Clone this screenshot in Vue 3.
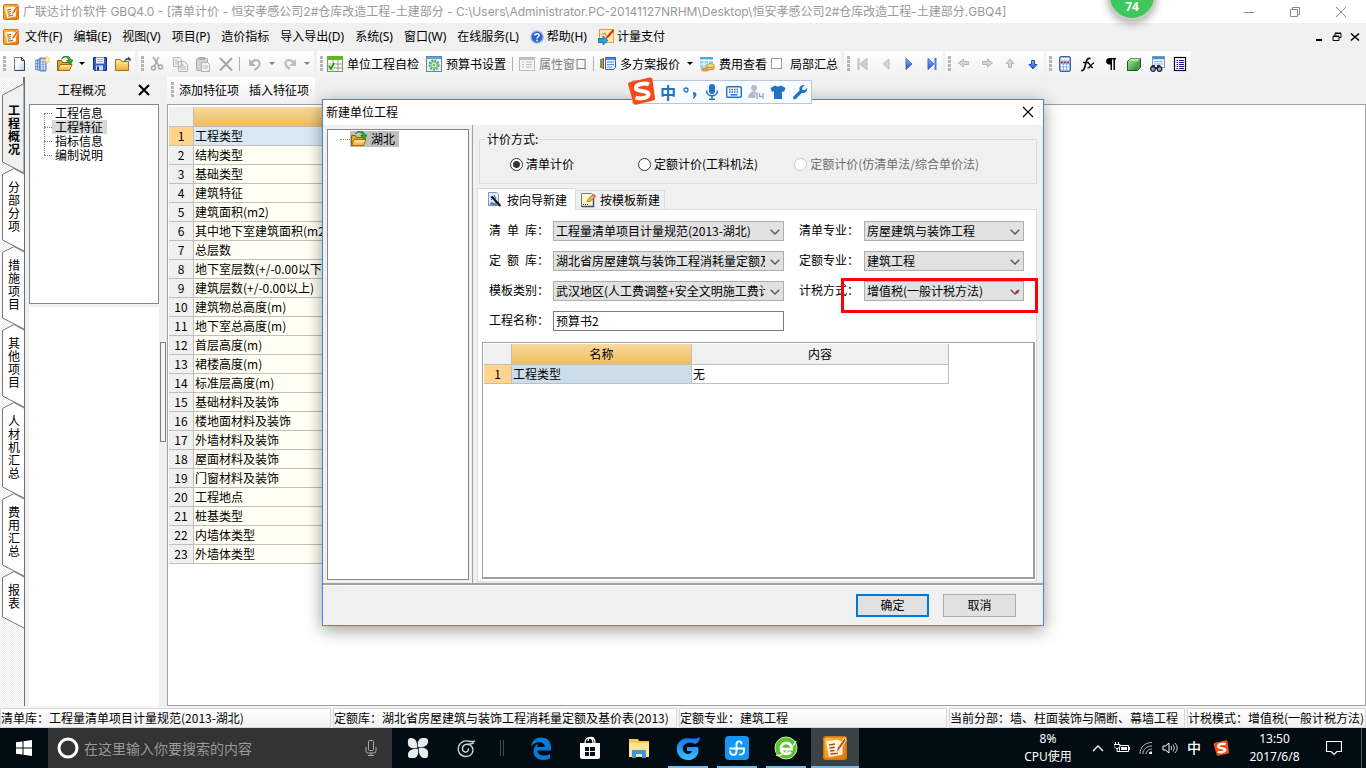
<script setup>
import { ref } from 'vue'

const path = 'C:\\Users\\Administrator.PC-20141127NRHM\\Desktop\\恒安孝感公司2#仓库改造工程-土建部分.GBQ4'
const title = `广联达计价软件 GBQ4.0 - [清单计价 - 恒安孝感公司2#仓库改造工程-土建部分 - ${path}]`

const menus = [
  { text: '文件(F)' }, { text: '编辑(E)' }, { text: '视图(V)' }, { text: '项目(P)' },
  { text: '造价指标' }, { text: '导入导出(D)' }, { text: '系统(S)' }, { text: '窗口(W)' },
  { text: '在线服务(L)' }, { text: '帮助(H)', icon: 'help', size: 'i14' }, { text: '计量支付', icon: 'pay', size: 'i16' },
]

const toolGroups = [
  [{ icon: 'new' }, { icon: 'building' }, { icon: 'open' }, { caret: true }, { icon: 'save' }, { icon: 'folder' }],
  [{ icon: 'cut' }, { icon: 'copy' }, { icon: 'paste' }, { icon: 'delete' }, { sep: true },
    { icon: 'undo' }, { caret: true, dim: true }, { icon: 'redo' }, { caret: true, dim: true }],
  [{ icon: 'selfcheck', text: '单位工程自检' }, { icon: 'gear', text: '预算书设置' }, { sep: true },
    { icon: 'props', text: '属性窗口', dim: true }, { sep: true },
    { icon: 'plans', text: '多方案报价' }, { caret: true }, { icon: 'cost', text: '费用查看' }, { check: '局部汇总' }],
  [{ icon: 'first' }, { icon: 'prev' }, { icon: 'next' }, { icon: 'last' }],
  [{ icon: 'left' }, { icon: 'right' }, { icon: 'up' }, { icon: 'down' }],
  [{ icon: 'calc' }, { icon: 'fx' }, { icon: 'para' }, { icon: 'cube' }, { icon: 'find' }, { icon: 'list' }],
]

const sideTabs = ['工程概况', '分部分项', '措施项目', '其他项目', '人材机汇总', '费用汇总', '报表']
  .map((name, i) => ({ name, h: 26 + 13 * name.length + (i === 0 ? 13 : 0) }))

const treeItems = ['工程信息', '工程特征', '指标信息', '编制说明']

const rows = [
  '工程类型', '结构类型', '基础类型', '建筑特征', '建筑面积(m2)', '其中地下室建筑面积(m2)', '总层数',
  '地下室层数(+/-0.00以下)', '建筑层数(+/-0.00以上)', '建筑物总高度(m)', '地下室总高度(m)', '首层高度(m)',
  '裙楼高度(m)', '标准层高度(m)', '基础材料及装饰', '楼地面材料及装饰', '外墙材料及装饰', '屋面材料及装饰',
  '门窗材料及装饰', '工程地点', '桩基类型', '内墙体类型', '外墙体类型',
]

const method = ref('list')
const methods = [
  { id: 'list', text: '清单计价' },
  { id: 'quota', text: '定额计价(工料机法)' },
  { id: 'mix', text: '定额计价(仿清单法/综合单价法)', off: true },
]

const fields = [
  { id: 'qdk', label: '清\u2002单\u2002库：', value: '工程量清单项目计量规范(2013-湖北)' },
  { id: 'qdzy', label: '清单专业：', value: '房屋建筑与装饰工程' },
  { id: 'dek', label: '定\u2002额\u2002库：', value: '湖北省房屋建筑与装饰工程消耗量定额及基价表(2013)' },
  { id: 'dezy', label: '定额专业：', value: '建筑工程' },
  { id: 'mblb', label: '模板类别：', value: '武汉地区(人工费调整+安全文明施工费计取)' },
  { id: 'jsfs', label: '计税方式：', value: '增值税(一般计税方法)', marked: true },
]
const projectName = ref('预算书2')

const status = [
  '清单库：工程量清单项目计量规范(2013-湖北)',
  '定额库：湖北省房屋建筑与装饰工程消耗量定额及基价表(2013)',
  '定额专业：建筑工程',
  '当前分部：墙、柱面装饰与隔断、幕墙工程',
  '计税模式：增值税(一般计税方法)',
]

const apps = [
  { icon: 'edge' }, { icon: 'store' }, { icon: 'explorer' },
  { icon: 'gbrowser', open: true }, { icon: 'anchor', open: true },
  { icon: 'greene', open: true }, { icon: 'gbq', open: true, active: true },
]
</script>

<template>
  <svg class="defs" aria-hidden="true">
    <defs>
      <linearGradient id="gOrange" x1="0" y1="0" x2="1" y2="1"><stop offset="0" stop-color="#ffc23c" /><stop offset="1" stop-color="#ee6f00" /></linearGradient>
      <linearGradient id="gFolder" x1="0" y1="0" x2="0" y2="1"><stop offset="0" stop-color="#fff0a0" /><stop offset="1" stop-color="#efae30" /></linearGradient>
      <linearGradient id="gBlue" x1="0" y1="0" x2="0" y2="1"><stop offset="0" stop-color="#8fb8ff" /><stop offset="1" stop-color="#1c4fc4" /></linearGradient>
      <linearGradient id="gGreen" x1="0" y1="0" x2="1" y2="1"><stop offset="0" stop-color="#9ae08c" /><stop offset="1" stop-color="#2c8a30" /></linearGradient>
      <linearGradient id="gSwirl" x1="0" y1="0" x2="0" y2="1"><stop offset="0" stop-color="#1d6cf0" /><stop offset="1" stop-color="#35c4ff" /></linearGradient>
      <linearGradient id="gPaper" x1="0" y1="0" x2="1" y2="1"><stop offset="0.4" stop-color="#fff" /><stop offset="1" stop-color="#b4c6e4" /></linearGradient>
    </defs>
    <symbol id="gbq" viewBox="0 0 16 16">
      <rect x="0.5" y="0.5" width="15" height="15" rx="1.5" fill="url(#gOrange)" stroke="#c87818" />
      <path d="M2 3.500l8-1 3 1.500v8.500L4 14z" fill="#fff6dc" />
      <path d="M4 6l4-.6M4.300 8l3.500-.5M4.700 10l3-.3M5 12l5-.5" stroke="#a4501c" fill="none" />
      <path d="M14.500 1L9.500 8l-.8 3 2.300-2L15.300 3z" fill="#d9481c" stroke="#fff" stroke-width=".5" />
    </symbol>
    <symbol id="help" viewBox="0 0 16 16">
      <circle cx="8" cy="8" r="7" fill="#2c63cf" stroke="#9db7e8" stroke-width="1.600" />
      <path d="M5.500 6.400C5.600 3.400 10.600 3.500 10.400 6.300 10.200 8 8 8 8 9.800" fill="none" stroke="#fff" stroke-width="1.700" /><rect x="7.100" y="11" width="1.900" height="1.900" fill="#fff" />
    </symbol>
    <symbol id="pay" viewBox="0 0 16 16">
      <rect x="1.500" y="0.500" width="14" height="13" fill="#ffe9b0" stroke="#f0a020" />
      <path d="M3 6l4-2 2 5" stroke="#c98a5a" fill="none" /><path d="M15 0l-6 7-1 3 3-2 5-6z" fill="#d83018" />
      <path d="M0 9.500h5V7l5 4.500-5 4.500v-2.500H0z" fill="#28a0e0" stroke="#0a5c98" stroke-width=".7" />
    </symbol>
    <symbol id="new" viewBox="0 0 16 16"><path d="M3.500 1.500h7l3 3v10h-10z" fill="url(#gPaper)" stroke="#6e7f9c" /><path d="M10.500 1.500v3h3z" fill="#fff" stroke="#3c4d70" /><path d="M13.500 5v9.500h-10" fill="none" stroke="#2c4068" /></symbol>
    <symbol id="building" viewBox="0 0 16 16"><path d="M1 4l5-2v13l-5-1z" fill="#7ea6d8" /><path d="M6 2h6v13H6z" fill="#a9c4ea" stroke="#3e69a8" stroke-width=".8" /><path d="M7 4.500h4M7 7h4M7 9.500h4M7 12h4M2 6h3M2 9h3M2 12h3" stroke="#fff" /><path d="M9 4v11M3.500 4v10" stroke="#4a78bc" stroke-width=".7" /><path d="M13 0v8M9.500 4h7M10.500 1.500l5 5M15.500 1.500l-5 5" stroke="#ffc02a" /><circle cx="13" cy="4" r="1.600" fill="#fff7b0" /></symbol>
    <symbol id="open" viewBox="0 0 16 16"><path d="M.5 14.500v-10h4l1 2h7v8z" fill="#e5a726" stroke="#8c6010" /><path d="M.7 14.500L3 8.500h12l-2.500 6z" fill="url(#gFolder)" stroke="#9c6c14" /><path d="M4.500 3C7 0 10.500.5 12 4.500h-2.300l4 4 2.100-4.500h-1.900C12.500-1 7-1.500 4.500 3z" fill="#2fb52f" stroke="#0c6c14" stroke-width=".7" /></symbol>
    <symbol id="save" viewBox="0 0 16 16"><path d="M1.500 1.500h13v13h-12l-1-1z" fill="#3a5bd0" stroke="#1c2f80" /><rect x="4" y="1.500" width="8" height="6" fill="#eef3ff" /><path d="M5 3.500h6M5 5.500h6" stroke="#9db0dc" /><rect x="4" y="9.500" width="7" height="5" fill="#d9def0" /><rect x="5" y="10.500" width="2" height="4" fill="#1c2f80" /></symbol>
    <symbol id="folder" viewBox="0 0 16 16"><path d="M.5 14.500v-11h5l1 2h7v9z" fill="url(#gFolder)" stroke="#9b7422" /><path d="M9 5c1-2 2-3 4-3V.5L16 3l-1 3-1-2c-2 0-3 .5-5 1z" fill="#34537c" /></symbol>
    <symbol id="cut" viewBox="0 0 16 16"><path d="M4 1l6 9M9.500 1l-4 9" stroke="#a8a8a8" stroke-width="1.600" fill="none" /><circle cx="4.500" cy="12" r="2" fill="none" stroke="#a8a8a8" stroke-width="1.500" /><circle cx="11.500" cy="11" r="2" fill="none" stroke="#a8a8a8" stroke-width="1.500" /></symbol>
    <symbol id="copy" viewBox="0 0 16 16"><path d="M1.500 1.500h6l2 2v7h-8zM6.500 5.500h6l3 3v7h-9z" fill="#f2f2f2" stroke="#b4b4b4" /><path d="M3 4h3M3 6h3M3 8h3M8 9h4M8 11h6M8 13h6" stroke="#bbb" /></symbol>
    <symbol id="paste" viewBox="0 0 16 16"><rect x="1.500" y="2.500" width="11" height="12" rx="1" fill="#d2d2d2" stroke="#a8a8a8" /><rect x="4" y="1" width="6" height="3" fill="#b0b0b0" /><path d="M6.500 6.500h6l2 2v7h-8z" fill="#f4f4f4" stroke="#b0b0b0" /><path d="M8 10h5M8 12h5" stroke="#bbb" /></symbol>
    <symbol id="delete" viewBox="0 0 16 16"><path d="M2 2l12 12.500M14 2L2 14.500" stroke="#a6a6a6" stroke-width="2" /></symbol>
    <symbol id="undo" viewBox="0 0 16 16"><path d="M4 7C7 3 13 3 12.500 8c-.3 3-2.500 4.500-5 6" fill="none" stroke="#b4b4b4" stroke-width="2.200" /><path d="M2 3v7h7z" fill="#b4b4b4" /></symbol>
    <symbol id="redo" viewBox="0 0 16 16"><path d="M12 7C9 3 3 3 3.500 8c.3 2 2 3.500 4.500 5" fill="none" stroke="#bcbcbc" stroke-width="2.200" /><path d="M14 3v7H7z" fill="#bcbcbc" /></symbol>
    <symbol id="selfcheck" viewBox="0 0 16 16"><rect x=".5" y=".5" width="15" height="15" fill="#fff" stroke="#7a8c70" /><rect x="0" y="0" width="16" height="4" fill="#62b51c" /><path d="M0 8h16M0 12h16M6 4v12M11 4v12" stroke="#8a9a88" /><rect x="1" y="7" width="6" height="7" fill="#c8ecb0" /><path d="M2 10l2 3 3-6" fill="none" stroke="#1f8c10" stroke-width="1.600" /></symbol>
    <symbol id="gear" viewBox="0 0 16 16"><rect x=".5" y=".5" width="15" height="15" fill="#e8f2fb" stroke="#5a87bd" /><rect x="1" y="1" width="14" height="2" fill="#6b9fda" /><circle cx="8" cy="9" r="4.500" fill="none" stroke="#4fa45a" stroke-width="2" stroke-dasharray="2 1" /><circle cx="8" cy="9" r="3.200" fill="#d2efd0" stroke="#6ab46e" /><circle cx="8" cy="9" r="1" fill="#4fa45a" /></symbol>
    <symbol id="props" viewBox="0 0 16 16"><rect x=".5" y="1.500" width="15" height="13" fill="#f4f4f4" stroke="#b8b8b8" /><path d="M1 3h14" stroke="#c4c4c4" stroke-width="2" /><path d="M3 6h2M7 6h6M3 8.500h2M7 8.500h6M3 11h2M7 11h6" stroke="#bdbdbd" /></symbol>
    <symbol id="plans" viewBox="0 0 16 16"><path d="M1 3v9" stroke="#18a028" stroke-width="1.600" /><path d="M3.200 2v11" stroke="#e02818" stroke-width="1.600" /><path d="M5.500 1.500h10v10l-2 2h-8z" fill="#eaf2ff" stroke="#2566c8" /><path d="M6 3h9" stroke="#4a8ae6" stroke-width="2" /><path d="M7 6h7M7 8.500h7M7 11h5" stroke="#5c8ed4" /></symbol>
    <symbol id="cost" viewBox="0 0 16 16"><rect x="1" y="1" width="13" height="11" fill="#8fd4f0" /><path d="M1 4.500h13M1 8h13M5 1v11M9.500 1v11" stroke="#fff" /><rect x="1" y="1" width="13" height="2" fill="#4fa9d8" /><ellipse cx="6" cy="13.500" rx="4" ry="2" fill="#d2a040" /><ellipse cx="11.500" cy="12" rx="4" ry="2" fill="#e7bd62" stroke="#a87820" stroke-width=".6" /><ellipse cx="11.500" cy="9.500" rx="4" ry="2" fill="#f2d488" stroke="#a87820" stroke-width=".6" /></symbol>
    <symbol id="first" viewBox="0 0 16 16"><path d="M3.500 2v12" stroke="#c2c2c2" stroke-width="2" /><path d="M12 2v12L5 8z" fill="#d0d0d0" stroke="#bdbdbd" /></symbol>
    <symbol id="prev" viewBox="0 0 16 16"><path d="M11 3v10L5 8z" fill="#d4d4d4" stroke="#bfbfbf" /></symbol>
    <symbol id="next" viewBox="0 0 16 16"><path d="M5 2.500v11L11 8z" fill="url(#gBlue)" stroke="#3a68cc" /></symbol>
    <symbol id="last" viewBox="0 0 16 16"><path d="M4 2.500v11l6-5.500z" fill="url(#gBlue)" stroke="#3a68cc" /><path d="M11.500 2v12" stroke="#4a78d8" stroke-width="2" /></symbol>
    <symbol id="left" viewBox="0 0 16 16"><path d="M2.500 7l5-4v2.500h5v3h-5V11z" fill="#d6d6d6" stroke="#b6b6b6" /></symbol>
    <symbol id="right" viewBox="0 0 16 16"><path d="M13.500 7l-5-4v2.500h-5v3h5V11z" fill="#d6d6d6" stroke="#b6b6b6" /></symbol>
    <symbol id="up" viewBox="0 0 16 16"><path d="M8 3l4 4.500H9.500v4h-3v-4H4z" fill="#d6d6d6" stroke="#b6b6b6" /></symbol>
    <symbol id="down" viewBox="0 0 16 16"><path d="M8 13l4-4.500H9.500v-4h-3v4H4z" fill="url(#gBlue)" stroke="#2450b0" /></symbol>
    <symbol id="calc" viewBox="0 0 16 16"><rect x="2.500" y=".5" width="11" height="15" rx="1.500" fill="#8fb2e4" stroke="#3c64a4" /><rect x="4" y="2" width="8" height="2.500" fill="#e8f6ff" /><path d="M4 6.500h8" stroke="#d02c2c" stroke-width="1.600" stroke-dasharray="2 1" /><path d="M4 9.500h8M4 12.500h8" stroke="#fff" stroke-width="1.800" stroke-dasharray="2 1" /></symbol>
    <symbol id="fx" viewBox="0 0 16 16"><path d="M1 14.500c3 .5 3.500-2 4.500-6S7 1.500 10.500 2.500M3 6.500h6" fill="none" stroke="#111" stroke-width="1.700" /><path d="M8 7.500c2.500-1 2 5 5 4M14 7c-2.500 0-3.500 5-6.500 5" fill="none" stroke="#111" stroke-width="1.400" /></symbol>
    <symbol id="para" viewBox="0 0 16 16"><path d="M13 2H6.500C2 2 2 8.500 6.500 8.500H7.500V14H9V3.500h1.500V14H12V3.500h1z" fill="#000" /></symbol>
    <symbol id="cube" viewBox="0 0 16 16"><path d="M1.500 5.500l3-3h10v9l-3 3h-10z" fill="#4f9f50" stroke="#24502a" /><path d="M2 5.500h9.500l3-3h-10z" fill="#b4e4a8" /><rect x="2" y="6" width="9" height="8" fill="url(#gGreen)" /></symbol>
    <symbol id="find" viewBox="0 0 16 16"><rect x="3.500" y=".5" width="12" height="11" fill="#eef5ff" stroke="#7a9cc8" /><path d="M4 2h11" stroke="#4f88d8" stroke-width="2.500" /><path d="M5 5.500h9M5 8h9" stroke="#8cb0e0" /><path d="M3 9h3v2h2V9h3l2 4H1z" fill="#333" /><circle cx="4" cy="13" r="2.300" fill="#8ad" stroke="#222" stroke-width="1.200" /><circle cx="10.500" cy="13" r="2.300" fill="#8ad" stroke="#222" stroke-width="1.200" /></symbol>
    <symbol id="list" viewBox="0 0 16 16"><rect x="2.500" y="1.500" width="11" height="13" fill="#fff" stroke="#000" stroke-width="1.200" /><path d="M4.500 4.500h1.500M7 4.500h5M4.500 6.500h1.500M7 6.500h5M4.500 8.500h1.500M7 8.500h5M4.500 10.500h1.500M7 10.500h5M4.500 12.500h1.500M7 12.500h5" stroke="#16168c" /></symbol>
    <symbol id="wizard" viewBox="0 0 16 16"><path d="M1.500.5h8l2 2v11h-10z" fill="#e4eefa" stroke="#7c94bc" /><path d="M2 12.500l3-3 2 2 2-2 2 4z" fill="#5a7cb4" /><circle cx="5" cy="5" r="1.500" fill="#9ab8e4" /><path d="M4.500 4.500l9 9.500" stroke="#111" stroke-width="2" /><path d="M4 8l3-3M7 3l2 4" stroke="#222" stroke-width=".8" /></symbol>
    <symbol id="template" viewBox="0 0 16 16"><path d="M1.500 1.500h10l2 2v11h-12z" fill="#fffbc8" stroke="#6c7c90" /><path d="M13.500 5v9.500h-12" fill="none" stroke="#345070" stroke-width="1.400" /><path d="M3 12.500h5" stroke="#444" stroke-dasharray="1 1" /><path d="M7 10l1.500-3.500L13.500 2 16 4.500 10.500 9z" fill="#f0b050" stroke="#8c5a20" stroke-width=".6" /><path d="M13.500 2L16 4.500l-1.500 1.400L12 3.500z" fill="#e07080" /></symbol>
    <symbol id="sogou" viewBox="0 0 28 28"><path d="M3 5L23 .5q2-.3 2.400 1.600L28 21q.3 2-1.600 2.500L9 27.700q-2 .4-2.500-1.500L1.200 8Q.8 5.600 3 5z" fill="#f04e17" /><path d="M22 7.500C18 5.500 8.500 7 9 11.500c.4 3.500 12 1.500 12.500 5.500.4 4-8.500 5.500-13 3.500" fill="none" stroke="#fff" stroke-width="4" /></symbol>
    <symbol id="mic" viewBox="0 0 16 16"><rect x="5" y="0" width="6" height="10" rx="3" fill="#1f72c4" /><path d="M2.500 6.500c0 7 11 7 11 0M8 12v3M5 15.200h6" fill="none" stroke="#1f72c4" stroke-width="1.600" /></symbol>
    <symbol id="kbd" viewBox="0 0 16 16"><rect x=".7" y="2.700" width="14.600" height="10.600" rx="1" fill="none" stroke="#1f72c4" stroke-width="1.400" /><path d="M3 5.500h10M3 8h10" stroke="#1f72c4" stroke-width="1.500" stroke-dasharray="1.500 1" /><path d="M4.500 10.800h7" stroke="#1f72c4" stroke-width="1.500" /></symbol>
    <symbol id="person" viewBox="0 0 16 16"><circle cx="6" cy="4" r="3" fill="#b2bdcf" /><path d="M0 14c0-8 11-8 11-4v4z" fill="#b2bdcf" /><path d="M7.500 9h1.500v6M11.500 9v3.500h3.500M15 9v6" fill="none" stroke="#f7fbff" stroke-width="3" /><path d="M7.500 9.500h1.500v5.500M11.500 9v3.500H15M15 9v6" fill="none" stroke="#9aa9c2" stroke-width="1.300" /></symbol>
    <symbol id="shirt" viewBox="0 0 16 16"><path d="M5 1.500q3 2 6 0l4.500 2.500-1.500 4-2-.7V15H4V7.300L2 8 .5 4z" fill="#1f72c4" /></symbol>
    <symbol id="wrench" viewBox="0 0 16 16"><path d="M1.500 12.500l6-6C6.500 3 9.500.5 12.500 1.200L10 3.800l.5 2 2 .5 2.600-2.500c.7 3.200-1.800 6-5.300 5.200l-6 6c-1.800 1.200-3.800-.8-2.300-2.500z" fill="#1f72c4" /></symbol>
    <symbol id="pinwheel" viewBox="0 0 24 24">
      <g fill="#e8ecec">
        <path id="petal" d="M12.300 11.200C10.800 6 12.500 1 17 1h2.500Q23 1 23 4.500C23 9 19 11.500 12.300 11.200z" />
        <use href="#petal" transform="rotate(90 12 12)" /><use href="#petal" transform="rotate(180 12 12)" /><use href="#petal" transform="rotate(270 12 12)" />
      </g>
    </symbol>
    <symbol id="swirl" viewBox="0 0 24 24"><path d="M23 3.500C18 6 14 2 9 4 3 6.500 1 13 4 18c4 6 13 5 15.500 0 2.500-6-1.500-11-7-10.500-5 .6-6.500 7-2.500 9 3 1.500 6-1.500 4.500-4M21.500 5.500c-3 2.500-6 1.500-9 2" fill="none" stroke="#ccd4d4" stroke-width="1.700" /></symbol>
    <symbol id="edge" viewBox="0 0 24 24"><path d="M2 10.500C3 4.500 7 1.500 12.500 1.500 19 1.500 22 6 22 12v2.500H8.500c.5 6 8 6 12.500 3.500v4.500C14 26 4 23.500 4.500 15c.2-3.500 2-6 5-7.500-1 1.300-1.200 2.500-1.200 3.500h7.500C16 5 6 4.500 2 10.500z" fill="#0b78d7" /></symbol>
    <symbol id="store" viewBox="0 0 24 24"><path d="M2 7h20v14q0 2-2 2H4q-2 0-2-2z" fill="#fff" /><path d="M7 7c0-7 8-7 8 0M10 5c0-5 7-5 7 2" fill="none" stroke="#fff" stroke-width="1.300" /><path d="M7 11h4v4H7zM12 11h5v4h-5zM7 16h4v4H7zM12 16h5v4h-5z" fill="#010d12" /></symbol>
    <symbol id="explorer" viewBox="0 0 24 24"><path d="M2 3h9l1 2h10v16H2z" fill="#f4c74e" /><path d="M2 7h20v14H2z" fill="#ffe493" /><path d="M5 22v-8h14v8h-4v-4H9v4z" fill="#3a9ad9" /></symbol>
    <symbol id="gbrowser" viewBox="0 0 24 24"><path d="M24 1C18 5 10-1 4 5-3 12 2 24 12 24c8 0 12-7 10-13H11v4h5c-1 4-8 4-9-1C5 7 15 5 19 8c3-1 5-4 5-7z" fill="url(#gSwirl)" /></symbol>
    <symbol id="anchor" viewBox="0 0 24 24"><rect width="24" height="24" rx="4" fill="#1496f4" /><path d="M16.500 7.500C16 4.500 11.500 4.500 11.500 8.500V15.500C11.500 20 5.500 20 5 15.500M5 12.500h14v2.500q0 3.500-4 3.500" fill="none" stroke="#fff" stroke-width="1.900" stroke-linecap="round" /></symbol>
    <symbol id="greene" viewBox="0 0 24 24"><circle cx="12" cy="12" r="11" fill="#5cc22c" stroke="#c4eeb0" stroke-width="1" /><path d="M6 13.200h11.500C18 5 7 5 7 12.500c0 6 7 6.500 10 3.500" fill="none" stroke="#fff" stroke-width="2.800" /><path d="M2 19C6 22 20 11 22 5" fill="none" stroke="#e4f8d4" stroke-width="1.300" /></symbol>
    <symbol id="chev" viewBox="0 0 10 6"><path d="M.7.700L5 5 9.300.700" fill="none" stroke="#555" stroke-width="1.300" /></symbol>
  </svg>

  <div class="screen">
    <header class="titlebar">
      <svg class="i16"><use href="#gbq" /></svg>
      <h1>{{ title }}</h1>
      <div class="winbtns">
        <button aria-label="最小化"><svg width="12" height="12"><path d="M1 6.500h10" stroke="#888" /></svg></button>
        <button aria-label="还原"><svg width="12" height="12"><path d="M1.500 3.500h7v7h-7zM3.500 3V1.500h7v7H9" fill="none" stroke="#888" /></svg></button>
        <button aria-label="关闭"><svg width="12" height="12"><path d="M1 1l10 10M11 1L1 11" stroke="#888" /></svg></button>
      </div>
    </header>

    <nav class="menubar">
      <svg class="i16"><use href="#gbq" /></svg>
      <button v-for="m in menus" :key="m.text"><svg v-if="m.icon" :class="m.size"><use :href="'#' + m.icon" /></svg>{{ m.text }}</button>
      <div class="mdi">
        <button aria-label="最小化文档"><svg width="10" height="10"><path d="M2 8h6" stroke="#000" stroke-width="2" /></svg></button>
        <button aria-label="还原文档"><svg width="10" height="10"><path d="M1 4.500h6v4H1zM3 4V1.500h6v4H7M1 4h6M3 1h6" fill="none" stroke="#000" /></svg></button>
        <button aria-label="关闭文档"><svg width="10" height="10"><path d="M1 1.500l8 7M9 1.500l-8 7" stroke="#000" stroke-width="1.600" /></svg></button>
      </div>
    </nav>

    <div class="toolbar">
      <div v-for="(g, gi) in toolGroups" :key="gi" class="group">
        <span class="grip"></span>
        <template v-for="(t, ti) in g" :key="ti">
          <span v-if="t.sep" class="sep"></span>
          <button v-else-if="t.caret" class="caret" :class="{ dim: t.dim }" aria-label="更多"><svg width="6" height="3"><path d="M0 0h6L3 3z" fill="currentColor" /></svg></button>
          <label v-else-if="t.check" class="tick"><input type="checkbox">{{ t.check }}</label>
          <button v-else-if="t.text" class="withtext" :class="{ dim: t.dim }"><svg class="i16"><use :href="'#' + t.icon" /></svg>{{ t.text }}</button>
          <button v-else class="tool" :aria-label="t.icon"><svg class="i16"><use :href="'#' + t.icon" /></svg></button>
        </template>
      </div>
    </div>

    <main class="work">
      <nav class="sidetabs">
        <button v-for="(t, i) in sideTabs" :key="t.name" :class="{ on: i === 0 }" :style="{ height: t.h + 'px' }">
          <svg width="24" :height="t.h + 6">
            <path v-if="i === 0" :d="`M23.500 0V7L2.500 18V${t.h - 6}L24 ${t.h + 5}V0`" fill="#f0f0f0" stroke="#777" />
            <path v-else :d="`M24 6L14 .5L2.500 6.500V${t.h - 6}L24 ${t.h + 5}`" fill="#fff" stroke="#777" />
          </svg>
          <span>{{ t.name }}</span>
        </button>
      </nav>

      <aside class="panel">
        <div class="panelhead"><h2>工程概况</h2><button aria-label="关闭面板"><svg width="12" height="12"><path d="M1 1l10 10M11 1L1 11" stroke="#000" stroke-width="2" /></svg></button></div>
        <ul class="tree">
          <li v-for="(t, i) in treeItems" :key="t"><span :class="{ sel: i === 1 }">{{ t }}</span></li>
        </ul>
        <div class="blank"></div>
      </aside>

      <div class="splitter"><span></span></div>

      <section class="content">
        <div class="subbar"><div class="group"><span class="grip"></span><button>添加特征项</button><button>插入特征项</button></div></div>
        <div class="sheet">
          <table class="grid">
            <colgroup><col class="cnum"><col class="cname"></colgroup>
            <thead><tr><th></th><th class="gold"></th></tr></thead>
            <tbody>
              <tr v-for="(r, i) in rows" :key="r" :class="{ cur: i === 0 }"><th>{{ i + 1 }}</th><td>{{ r }}</td></tr>
            </tbody>
          </table>
        </div>
      </section>
    </main>

    <footer class="status"><div v-for="s in status" :key="s">{{ s }}</div></footer>

    <div class="taskbar">
      <button class="start" aria-label="开始"><svg width="16" height="16"><path d="M0 2.300L6.500 1.400V7.500H0zM7.500 1.200L16 0V7.500H7.500zM0 8.500h6.500v6.100L0 13.700zM7.500 8.500H16V16l-8.500-1.200z" fill="#fff" /></svg></button>
      <div class="search">
        <svg width="22" height="22"><circle cx="11" cy="11" r="9" fill="none" stroke="#fff" stroke-width="3" /></svg>
        <input type="text" placeholder="在这里输入你要搜索的内容" aria-label="搜索">
        <svg width="12" height="18"><rect x="3.500" y="1.500" width="5" height="10" rx="1" fill="none" stroke="#aaa" /><path d="M1 8v4q0 2 2 2h6q2 0 2-2V8M6 14v2.500M3 16.500h6" fill="none" stroke="#aaa" /></svg>
      </div>
      <div class="pins">
        <button aria-label="风车"><svg class="i22"><use href="#pinwheel" /></svg></button>
        <button aria-label="漩涡"><svg class="i20"><use href="#swirl" /></svg></button>
      </div>
      <span class="tsep"></span>
      <div class="apps">
        <button v-for="a in apps" :key="a.icon" :class="{ open: a.open, active: a.active }" :aria-label="a.icon"><svg class="i24"><use :href="'#' + a.icon" /></svg></button>
      </div>
      <div class="tray">
        <div class="cpu"><span>8%</span><span>CPU使用</span></div>
        <button aria-label="显示隐藏的图标"><svg width="12" height="8"><path d="M1 7l5-5 5 5" fill="none" stroke="#fff" stroke-width="1.300" /></svg></button>
        <button aria-label="电源"><svg width="16" height="12"><path d="M5.500 3.500h9v6h-9zM15.500 5v3" fill="none" stroke="#fff" /><path d="M7 5h6v3H7z" fill="#fff" /><path d="M1.500 0v3M4.500 0v3M0 2.500h6v2L4 6.500H2L0 4.500zM3 6v3.500h3" fill="#010d12" stroke="#fff" /></svg></button>
        <button aria-label="网络"><svg width="14" height="14"><path d="M1 13C1 6 6 1.500 13 1.500M4 13c0-5 4-8 9-8M7 13c0-3 3-5 6-5" fill="none" stroke="#bbb" /><path d="M10 13c0-2 1-2.500 3-2.500V13z" fill="#fff" /></svg></button>
        <button aria-label="音量"><svg width="16" height="14"><path d="M1 5h2.500L7 2v10L3.500 9H1z" fill="none" stroke="#fff" /><path d="M9 5q1.500 2 0 4M11 3.500q3 3.500 0 7M13 2q4.500 5 0 10" fill="none" stroke="#ccc" /></svg></button>
        <button class="ime">中</button>
        <button class="sg" aria-label="搜狗输入法"><svg class="i16"><use href="#sogou" /></svg></button>
        <div class="clock"><span>13:50</span><span>2017/6/8</span></div>
        <button class="note" aria-label="通知"><svg width="16" height="16"><path d="M.5 1.500h15v10H11L8 14.500 5 11.500H.5z" fill="none" stroke="#fff" stroke-width="1.200" /></svg></button>
        <span class="peek"></span>
      </div>
    </div>

    <section class="dialog" role="dialog" aria-labelledby="dlgtitle">
      <header><h2 id="dlgtitle">新建单位工程</h2><button aria-label="关闭对话框"><svg width="12" height="12"><path d="M1 1l10 10M11 1L1 11" stroke="#000" stroke-width="1.200" /></svg></button></header>
      <div class="dbody">
        <div class="dleft"><div class="region"><i></i><span><svg class="i16"><use href="#open" /></svg><b>湖北</b></span></div></div>
        <div class="dright">
          <fieldset>
            <legend>计价方式:</legend>
            <label v-for="m in methods" :key="m.id" :class="{ off: m.off }"><input v-model="method" type="radio" name="method" :value="m.id" :disabled="m.off">{{ m.text }}</label>
          </fieldset>
          <div class="tabs">
            <button class="on"><svg class="i16"><use href="#wizard" /></svg>按向导新建</button>
            <button><svg class="i16"><use href="#template" /></svg>按模板新建</button>
          </div>
          <div class="pane">
            <div class="form">
              <template v-for="f in fields" :key="f.id">
                <label :for="f.id">{{ f.label }}</label>
                <div class="combo">
                  <select :id="f.id"><option>{{ f.value }}</option></select>
                  <svg width="10" height="6"><use href="#chev" /><circle v-if="f.marked" cx="7" cy="3" r="1.500" fill="#f00" /></svg>
                  <span v-if="f.marked" class="mark"></span>
                </div>
              </template>
              <label for="pname">工程名称：</label>
              <input id="pname" v-model="projectName" type="text">
            </div>
            <div class="inner">
              <table class="grid">
                <colgroup><col class="inum"><col class="iname"><col class="ival"></colgroup>
                <thead><tr><th></th><th class="gold">名称</th><th>内容</th></tr></thead>
                <tbody><tr class="cur"><th>1</th><td>工程类型</td><td class="plain">无</td></tr></tbody>
              </table>
            </div>
          </div>
        </div>
      </div>
      <div class="dfoot"><button class="ok">确定</button><button>取消</button></div>
    </section>

    <div class="imebar">
      <svg class="logo"><use href="#sogou" /></svg>
      <button class="zh">中</button>
      <button aria-label="标点"><svg width="16" height="16"><circle cx="4" cy="6" r="2" fill="none" stroke="#1f72c4" stroke-width="1.300" /><path d="M11.500 8.500q3.500 0 2 3.500l-2 2.500q1-2.500.5-3z" fill="#1f72c4" stroke="#1f72c4" /></svg></button>
      <button v-for="n in ['mic', 'kbd', 'person', 'shirt', 'wrench']" :key="n" :aria-label="n"><svg class="i16"><use :href="'#' + n" /></svg></button>
    </div>

    <div class="ball">74</div>
  </div>
</template>

<style>
body { margin: 0; overflow: hidden; }
</style>

<style scoped>
* { box-sizing: border-box; }
.defs { position: absolute; width: 0; height: 0; }
.screen {
  position: relative; display: flex; flex-direction: column; height: 100vh; overflow: hidden;
  background: #f0f0f0; color: #000;
  font: 12px/16px "Noto Sans CJK SC", sans-serif;
}
button, input, select { font: inherit; color: inherit; margin: 0; }
button { border: 0; background: none; padding: 0; white-space: nowrap; display: flex; align-items: center; justify-content: center; }
h1, h2 { margin: 0; font: inherit; }
svg { display: block; flex: none; }
.i14 { width: 14px; height: 14px; }
.i16 { width: 16px; height: 16px; }
.i20 { width: 20px; height: 20px; }
.i22 { width: 22px; height: 22px; }
.i24 { width: 24px; height: 24px; }

.titlebar { display: flex; align-items: center; height: 23px; padding-left: 3px; background: #fff; color: #999; }
.titlebar h1 { flex: 1; margin-left: 4px; white-space: nowrap; overflow: hidden; font-family: Inter, "Noto Sans CJK SC", sans-serif; }
.winbtns { display: flex; padding-right: 2px; }
.winbtns button { width: 46px; height: 20px; }

.menubar { display: flex; align-items: center; gap: 11px; height: 28px; padding-left: 3px; font-family: "Noto Sans", "Noto Sans CJK SC", sans-serif; }
.menubar > svg { margin-right: -5px; }
.menubar > button { gap: 3px; }
.mdi { display: flex; gap: 8px; margin-left: auto; padding-right: 6px; }

.toolbar { display: flex; gap: 3px; height: 26px; }
.group { display: flex; align-items: center; height: 26px; padding: 0 1px 1px 0; background: linear-gradient(#fff, #f1f1f1); }
.toolbar .group:nth-child(n+4) { margin-right: -1px; padding-right: 0; }
.grip { width: 3px; height: 15px; margin: 0 1px 0 3px; background: repeating-linear-gradient(#b4b4b4 0 3px, transparent 3px 4px); }
.tool { width: 23px; height: 24px; }
.caret { width: 12px; height: 24px; }
.dim { color: #808080; }
.sep { width: 6px; height: 14px; background: linear-gradient(90deg, transparent 2px, #b0b0b0 2px 3px, transparent 3px); }
.withtext { gap: 4px; padding: 0 4px 0 3px; }
.tick { display: flex; align-items: center; gap: 8px; padding-right: 2px; white-space: nowrap; }
.tick input { appearance: none; width: 11px; height: 11px; margin: 0; border: 1px solid #999; background: #fff; }

.work { flex: 1; min-height: 0; display: flex; }
.sidetabs { width: 25px; border-right: 1px solid #707070; background: repeating-conic-gradient(#fff 0 25%, #ececec 0 50%) 0 0 / 2px 2px; }
.sidetabs button { position: relative; width: 24px; }
.sidetabs svg { position: absolute; left: 0; top: 0; }
.sidetabs span { position: relative; width: 12px; margin-left: 4px; margin-bottom: 3px; line-height: 13px; white-space: normal; word-break: break-all; }
.sidetabs .on span { margin-bottom: 0; margin-top: 12px; font-weight: bold; }
.panel { display: flex; flex-direction: column; width: 134px; padding-left: 4px; }
.panelhead { display: flex; align-items: center; justify-content: space-between; height: 27px; padding: 0 9px 1px 29px; }
.tree { height: 200px; margin: 0 0 3px; padding: 1px 0 0 14px; border: 1px solid #828790; background: #fff; list-style: none; line-height: 14px; }
.tree li { position: relative; display: flex; align-items: center; height: 14px; }
.tree li::before { content: ""; width: 8px; border-top: 1px dotted #808080; }
.tree li + li::after { content: ""; position: absolute; left: 0; top: -7px; height: 14px; border-left: 1px dotted #808080; }
.tree span { padding: 0 4px 0 3px; }
.sel { background: #d9d9d9; }
.blank { flex: 1; background: #fff; }
.splitter { display: flex; flex-direction: column; align-items: center; justify-content: center; width: 8px; }
.splitter span { width: 6px; height: 100px; border: 1px solid #808080; background: #f4f4f4; }
.content { flex: 1; min-width: 0; display: flex; flex-direction: column; }
.subbar { display: flex; height: 27px; }
.subbar .group { gap: 10px; padding-right: 6px; padding-left: 1px; }
.subbar .grip { margin-right: -5px; margin-left: 3px; }
.sheet { flex: 1; min-height: 0; overflow: hidden; padding: 2px 0 0 1px; border: 1px solid #a0a0a0; background: #fff; }

.grid { border-collapse: separate; border-spacing: 0; table-layout: fixed; width: 0; }
.grid th, .grid td { height: 19px; padding: 0; border: solid #bfbfbf; border-width: 0 1px 1px 0; font-weight: normal; line-height: 16px; white-space: nowrap; overflow: hidden; }
.grid th { background: #f0f0f0; }
.grid td { padding-left: 1px; background: #fffff3; }
.grid thead th { height: 20px; }
.grid thead .gold { background: linear-gradient(#f9d9a0, #eebc5c); }
.grid .cur th { background: #ffd48c; }
.grid .cur td { background: #d9e8f2; }
.cnum { width: 25px; }
.cname { width: 300px; }

.status { display: flex; gap: 2px; height: 22px; padding-top: 2px; background: #f4f4f4; }
.status div { width: 344px; height: 20px; border: 1px solid #d8d8d8; background: linear-gradient(#fff, #f2f2f2); white-space: nowrap; overflow: hidden; line-height: 18px; }
.status div:nth-child(1) { width: 331px; }
.status div:nth-child(3) { flex: 1; }
.status div:nth-child(4) { width: 236px; }
.status div:nth-child(5) { width: 179px; }

.taskbar { display: flex; height: 40px; background: #010d12; color: #fff; }
.start { width: 48px; }
.search { display: flex; align-items: center; width: 344px; padding: 0 15px 0 9px; background: #333; }
.search input { flex: 1; min-width: 0; margin-left: 5px; padding: 0; border: 0; outline: 0; background: none; font-size: 14px; }
.search input::placeholder { color: #999; opacity: 1; }
.pins { display: flex; margin-left: 2px; }
.pins button { width: 48px; }
.tsep { width: 4px; height: 16px; margin: 12px 13px 0 10px; border: solid #444c50; border-width: 0 1px; }
.apps { display: flex; gap: 1px; }
.apps button { width: 48px; }
.open { background: linear-gradient(#76b9ed, #76b9ed) center bottom / 40px 2px no-repeat; }
.active { background: linear-gradient(#76b9ed, #76b9ed) center bottom / 48px 2px no-repeat #3b4245; }
.tray { display: flex; margin-left: auto; font-family: "Noto Sans", "Noto Sans CJK SC", sans-serif; }
.tray button { width: 24px; }
.cpu, .clock { display: flex; flex-direction: column; align-items: center; justify-content: center; line-height: 18px; }
.cpu { width: 64px; margin-right: 6px; }
.clock { width: 71px; margin-left: 6px; }
.tray .ime { font-size: 14px; font-weight: 500; }
.tray .sg { margin-left: 3px; }
.tray .note { width: 48px; }
.peek { width: 5px; margin-left: 3px; border-left: 1px solid #50585c; }

.dialog {
  position: absolute; left: calc(50% - 361px); top: 99px; width: 722px; height: 527px;
  display: flex; flex-direction: column; border: 1px solid #3c8ce0; background: #f0f0f0;
  box-shadow: 0 4px 16px rgba(0, 0, 0, .4);
}
.dialog header { display: flex; align-items: center; justify-content: space-between; height: 25px; padding: 0 9px 1px 3px; background: #fff; }
.dbody { flex: 1; min-height: 0; display: flex; border-bottom: 2px solid #a0a0a0; }
.dleft { display: flex; width: 150px; padding: 4px 3px 3px 4px; border-right: 1px solid #a0a0a0; }
.region { flex: 1; display: flex; align-items: flex-start; padding: 1px 0 0 12px; border: 1px solid #828790; background: #fff; }
.region i { width: 10px; margin-top: 8px; border-top: 1px dotted #808080; }
.region span { display: flex; padding-left: 1px; background: #bfbfbf; }
.region b { padding: 0 4px 0 4px; font-weight: normal; }
.dright { flex: 1; min-width: 0; display: flex; flex-direction: column; padding: 6px 6px 1px 4px; }
fieldset { display: flex; align-items: flex-start; height: 53px; margin: 0 0 4px 2px; padding: 9px 0 0 30px; border: 1px solid #dcdcdc; }
legend { margin-left: -24px; padding: 0 1px; }
fieldset label { display: flex; align-items: center; gap: 3px; white-space: nowrap; }
fieldset label + label { margin-left: 64px; }
fieldset label + label + label { margin-left: 36px; }
fieldset input { appearance: none; width: 13px; height: 13px; border: 1px solid #333; border-radius: 50%; background: #fff; }
fieldset input:checked { background: radial-gradient(#333 0 3px, #fff 4px); }
.off { color: #6d6d6d; }
.off input { border-color: #ccc; }
.tabs { display: flex; align-items: flex-end; height: 21px; }
.tabs button { position: relative; gap: 4px; height: 19px; padding: 0 4px; border: 1px solid #dcdcdc; border-left: 0; border-bottom: 0; background: #f0f0f0; }
.tabs .on { height: 22px; margin-bottom: -1px; padding: 0 8px 0 9px; border-left: 1px solid #dcdcdc; background: #fff; z-index: 1; }
.pane { flex: 1; min-height: 0; display: flex; flex-direction: column; padding: 11px 1px 2px 4px; border: 1px solid #dcdcdc; background: #fff; }
.form { display: grid; grid-template-columns: 64px 231px 80px 160px; gap: 10px 0; padding-left: 7px; }
.form label { line-height: 18px; }
.form label:nth-of-type(even) { padding-left: 15px; }
.combo { position: relative; }
.combo select { appearance: none; display: block; width: 100%; height: 20px; padding: 0 18px 0 2px; border: 1px solid #adadad; border-radius: 0; background: #e1e1e1; overflow: hidden; }
.combo svg { position: absolute; right: 4px; top: 8px; pointer-events: none; }
.mark { position: absolute; left: -23px; right: -14px; top: -3px; height: 35px; border: 3px solid #f00; pointer-events: none; }
.form > input { height: 20px; padding: 0 2px 2px; border: 1px solid #7a7a7a; background: #fff; }
.inner { flex: 1; min-height: 0; margin-top: 11px; padding: 1px; border: 1px solid #a0a0a0; border-right-width: 2px; border-bottom-width: 2px; background: #fff; }
.inner .grid thead th { height: 21px; }
.inner .grid .cur td { background: #cbdcea; }
.inner .grid .cur .plain { background: #fff; }
.inum { width: 28px; }
.iname { width: 180px; }
.ival { width: 257px; }
.dfoot { display: flex; align-items: center; justify-content: flex-end; gap: 14px; height: 40px; padding-right: 27px; border-top: 1px solid #fff; }
.dfoot button { width: 73px; height: 23px; padding-bottom: 2px; border: 1px solid #adadad; background: #e1e1e1; }
.dfoot .ok { border: 2px solid #0078d7; }

.imebar { position: absolute; left: calc(50% - 51px); top: 80px; display: flex; align-items: center; height: 24px; padding-left: 24px; border: 1px solid #b8c6dc; background: #f8fbff; }
.imebar button { width: 22px; height: 22px; }
.logo { position: absolute; left: -6px; top: -4px; width: 28px; height: 28px; }
.zh { color: #1f72c4; font-size: 16px; font-weight: bold; }
.ball { position: absolute; right: 210px; top: -28px; width: 48px; height: 48px; padding-top: 26px; border: 2px solid #ccc; border-radius: 50%; background: #3fc65c; color: #fff; font: bold 12px/14px "Noto Sans", sans-serif; text-align: center; box-shadow: 0 3px 8px rgba(0, 0, 0, .35); }
</style>
